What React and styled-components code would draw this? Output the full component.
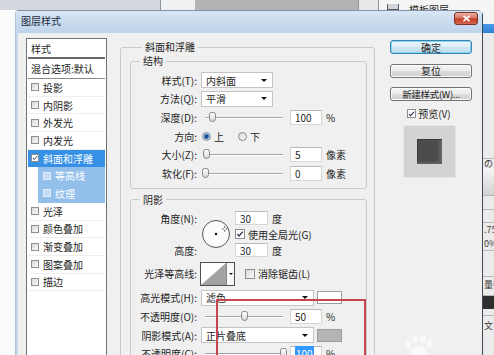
import React from 'react';
import styled, { createGlobalStyle } from 'styled-components';

const GlobalStyle = createGlobalStyle`
  html, body { margin: 0; padding: 0; }
  body {
    font-family: "Noto Sans CJK SC", "Noto Sans", sans-serif;
    font-size: 10px;
    color: #1e1e1e;
  }
`;

const Page = styled.div`
  position: relative;
  width: 494px;
  height: 355px;
  overflow: hidden;
  display: flex;
  flex-direction: column;
  background: #fafafa;
`;

/* ---------- background application around the dialog ---------- */

const TopStrip = styled.div`
  height: 10px;
  flex-shrink: 0;
  display: flex;
  overflow: hidden;
`;

const Seg = styled.div`
  width: ${p => p.$w}px;
  flex-shrink: 0;
  background: ${p => p.$bg};
  border-right: ${p => (p.$line ? '1px solid #8f969d' : 'none')};
  box-sizing: border-box;
  display: flex;
  align-items: flex-end;
  gap: 10px;
  padding-left: 8px;
  overflow: hidden;
`;

const StripText = styled.span`
  font-size: 10px;
  line-height: 10px;
  margin-bottom: -5px;
  color: #2b2b2b;
  white-space: nowrap;
`;

const StripIcon = styled.span`
  width: 10px;
  height: 5px;
  border: 1px solid #5a5a5a;
  border-top: none;
  background: #cfd5db;
`;

const Main = styled.div`
  flex: 1;
  min-height: 0;
  display: flex;
`;

const Gutter = styled.div`
  width: 15px;
  flex-shrink: 0;
  background: #fbfbfb;
`;

const SideApp = styled.div`
  width: 11px;
  flex-shrink: 0;
  display: flex;
  flex-direction: column;
  background: #ebebeb;
  overflow: hidden;
`;

const SidePiece = styled.div`
  height: ${p => p.$h}px;
  flex-shrink: 0;
  background: ${p => p.$bg || 'transparent'};
  border-bottom: ${p => (p.$line ? '1px solid #b9b9b9' : 'none')};
  box-sizing: border-box;
  font-size: 9px;
  line-height: ${p => p.$h}px;
  color: #3a3a3a;
  white-space: nowrap;
  padding-left: 1px;
`;

/* ---------- dialog frame ---------- */

const Dialog = styled.div`
  width: 468px;
  flex-shrink: 0;
  box-sizing: border-box;
  display: flex;
  flex-direction: column;
  background: #c4d6ea;
  border: 1px solid #7f91a5;
  border-left-color: #b3c3d4;
  border-right-color: #3d4b5b;
  border-bottom: none;
  border-radius: 4px 5px 0 0;
`;

const TitleBar = styled.div`
  height: 22px;
  flex-shrink: 0;
  display: flex;
  align-items: flex-start;
  justify-content: space-between;
  padding: 4px 4px 0 5px;
  box-sizing: border-box;
  background: linear-gradient(#d9e6f4, #c6d9ee 60%, #bfd3ea);
`;

const Title = styled.span`
  font-size: 10px;
  line-height: 12px;
  color: #1b2a3a;
`;

const CloseButton = styled.div`
  width: 24px;
  height: 13px;
  margin-top: -3px;
  box-sizing: border-box;
  border: 1px solid #7a3126;
  border-radius: 3px;
  background: linear-gradient(#eab3a6, #d9735f 45%, #c43b22 55%, #d3694f);
  display: flex;
  align-items: center;
  justify-content: center;
`;

const Body = styled.div`
  flex: 1;
  min-height: 0;
  margin-left: 2px;
  background: #f0f0f0;
  display: flex;
  align-items: flex-start;
  padding: 5px 0 0 8px;
`;

/* ---------- styles list ---------- */

const List = styled.div`
  width: 81px;
  flex-shrink: 0;
  align-self: stretch;
  box-sizing: border-box;
  border: 1px solid #6f7378;
  border-bottom: none;
  background: #fff;
  padding: 0 1px;
`;

const ListHead = styled.div`
  height: 20px;
  box-sizing: border-box;
  border-bottom: 2px solid #686868;
  display: flex;
  align-items: center;
  padding-left: 3px;
`;

const BlendRow = styled.div`
  height: 20px;
  box-sizing: border-box;
  border-bottom: 1px solid #8c8c8c;
  display: flex;
  align-items: center;
  padding-left: 3px;
  white-space: nowrap;
`;

const Item = styled.div`
  height: 17.7px;
  box-sizing: border-box;
  display: flex;
  align-items: center;
  gap: 4px;
  padding-left: ${p => (p.$sub ? 5 : 3)}px;
  margin-left: ${p => (p.$sub ? 10 : 0)}px;
  background: ${p => (p.$sel ? '#3690e6' : p.$sub ? '#93bfeb' : 'transparent')};
  color: ${p => (p.$sel || p.$sub ? '#fff' : '#1e1e1e')};
  border-bottom: 1px solid ${p => (p.$sel || p.$sub ? 'transparent' : '#eeeeee')};
  white-space: nowrap;
`;

const Box = styled.span`
  width: ${p => p.$s || 8}px;
  height: ${p => p.$s || 8}px;
  flex-shrink: 0;
  box-sizing: border-box;
  border: 1px solid ${p => (p.$pale ? '#e4eefa' : '#8e8e8e')};
  background: ${p =>
    p.$pale ? '#c3dbf4' : p.$on ? '#fdfdfd' : 'linear-gradient(135deg, #d8d8d8, #fafafa)'};
  display: inline-flex;
  align-items: center;
  justify-content: center;
  margin-left: ${p => p.$ml || 0}px;
`;

/* ---------- middle settings ---------- */

const Middle = styled.div`
  width: 255px;
  flex-shrink: 0;
  margin: 3px 0 0 13px;
`;

const Group = styled.fieldset`
  margin: ${p => p.$m || '0'};
  padding: ${p => p.$pad || '0'};
  border: 1px solid #cacaca;
  border-radius: 3px;
  min-width: 0;
`;

const Legend = styled.legend`
  font-size: 10px;
  line-height: 12px;
  padding: 0 3px;
  margin-left: ${p => p.$ml}px;
`;

const Row = styled.div`
  display: flex;
  align-items: center;
  height: ${p => p.$h || 18.6}px;
`;

const Label = styled.span`
  width: 70px;
  flex-shrink: 0;
  box-sizing: border-box;
  padding-right: 4px;
  text-align: right;
  white-space: nowrap;
`;

const Select = styled.div`
  width: ${p => p.$w}px;
  height: 16px;
  flex-shrink: 0;
  box-sizing: border-box;
  border: 1px solid #c4c4c4;
  background: #fff;
  display: flex;
  align-items: center;
  justify-content: space-between;
  padding: 0 5px 0 4px;
`;

const Arrow = styled.span`
  width: 0;
  height: 0;
  border-left: 3px solid transparent;
  border-right: 3px solid transparent;
  border-top: 3px solid #111;
`;

const Slider = styled.div`
  width: 89px;
  height: 12px;
  flex-shrink: 0;
  box-sizing: border-box;
  padding: 0 7px 0 4px;
  display: flex;
  align-items: center;
`;

const Track = styled.div`
  position: relative;
  flex: 1;
  height: 1px;
  background: #a6a6a6;
  box-shadow: 0 1px 0 #ffffff;
`;

const Thumb = styled.span`
  position: absolute;
  top: -5px;
  left: ${p => p.$at * 78 - 3.5}px;
  width: 7px;
  height: 10px;
  box-sizing: border-box;
  border: 1px solid #858585;
  border-radius: 3px 3px 4px 4px;
  background: linear-gradient(#fefefe, #d9d9d9);
`;

const NumBox = styled.div`
  width: ${p => p.$w || 32}px;
  height: ${p => p.$h || 15}px;
  flex-shrink: 0;
  box-sizing: border-box;
  border: 1px solid #d6d6d6;
  border-top-color: #b9b9b9;
  background: #fff;
  padding-left: 4px;
  display: flex;
  align-items: center;
`;

const Picked = styled.span`
  background: #3399ff;
  color: #fff;
  padding: 0 1px;
`;

const Unit = styled.span`
  margin-left: 4px;
  white-space: nowrap;
`;

const Radio = styled.span`
  width: 9px;
  height: 9px;
  flex-shrink: 0;
  box-sizing: border-box;
  border-radius: 50%;
  border: 1px solid #8a8a8a;
  background: ${p =>
    p.$on
      ? 'radial-gradient(circle, #1d4f8f 0 1.6px, #5e9ad6 2.4px, #dbe8f5 3.4px)'
      : 'linear-gradient(135deg, #d6d6d6, #fbfbfb)'};
  margin-left: ${p => p.$ml || 0}px;
`;

const RadioText = styled.span`
  margin-left: 3px;
`;

const AngleBlock = styled.div`
  display: grid;
  grid-template-columns: 70px 34px auto;
  grid-template-rows: 17px 15px 17px;
  align-items: center;
`;

const Dial = styled.div`
  grid-column: 2;
  grid-row: 1 / 4;
  width: 30px;
  height: 30px;
`;

const Cell = styled.div`
  grid-column: ${p => p.$col};
  grid-row: ${p => p.$row};
  display: flex;
  align-items: center;
`;

const CheckText = styled.span`
  margin-left: 3px;
  white-space: nowrap;
`;

const Contour = styled.div`
  width: 35px;
  height: 24px;
  margin-left: -1px;
  flex-shrink: 0;
  box-sizing: border-box;
  border: 1px solid #4f4f4f;
  background: #fff;
  display: flex;
`;

const ContourDrop = styled.div`
  flex: 1;
  border-left: 1px solid #8a8a8a;
  background: #f7f7f7;
  display: flex;
  align-items: center;
  justify-content: center;
`;

const SmallArrow = styled.span`
  width: 0;
  height: 0;
  border-left: 2px solid transparent;
  border-right: 2px solid transparent;
  border-top: 2px solid #111;
`;

const Swatch = styled.div`
  width: 25px;
  height: 13px;
  margin-left: 3px;
  flex-shrink: 0;
  box-sizing: border-box;
  border: 1px solid #9c9c9c;
  background: ${p => p.$color};
`;

/* ---------- right buttons ---------- */

const Side = styled.div`
  width: 82px;
  flex-shrink: 0;
  margin: 2px 0 0 15px;
  display: flex;
  flex-direction: column;
  gap: 9.5px;
`;

const Button = styled.div`
  height: 14px;
  box-sizing: border-box;
  border: 1px solid ${p => (p.$primary ? '#3b82b0' : '#737373')};
  border-radius: 3px;
  background: ${p =>
    p.$primary
      ? 'linear-gradient(#eef6fb, #dcedf7 50%, #cde4f2 51%, #c3ddee)'
      : 'linear-gradient(#f6f6f6, #ebebeb 48%, #dddddd 52%, #cfcfcf)'};
  box-shadow: ${p => (p.$primary ? 'inset 0 0 0 1px #7fd6f2' : 'inset 0 0 0 1px #fbfbfb')};
  display: flex;
  align-items: center;
  justify-content: center;
  white-space: nowrap;
  font-size: ${p => (p.$tight ? 9.5 : 10)}px;
  letter-spacing: ${p => (p.$tight ? '-0.3px' : '0')};
`;

const PreviewCheck = styled.div`
  height: 12px;
  margin-top: -3px;
  display: flex;
  align-items: center;
  justify-content: center;
  gap: 2px;
  padding-right: 4px;
`;

const PreviewBox = styled.div`
  width: 53px;
  height: 53px;
  margin: -4px 0 0 13px;
  box-sizing: border-box;
  border: 1px solid #e6e6e6;
  background: #d3d3d3;
  display: flex;
  align-items: center;
  justify-content: center;
`;

const PreviewSquare = styled.div`
  width: 25px;
  height: 25px;
  background: linear-gradient(90deg, #4a4a4a 0%, #4d4d4d 80%, #6a6a6a 100%);
  box-shadow: inset 0 -2px 0 #5e5e5e, inset 1px 1px 0 #3a3a3a;
`;

/* ---------- overlays ---------- */

const Annotation = styled.div`
  position: absolute;
  left: 216px;
  top: 299px;
  width: 150px;
  height: 80px;
  box-sizing: border-box;
  border: 2px solid #c9454e;
  pointer-events: none;
`;

const Watermark = styled.svg`
  position: absolute;
  left: 398px;
  top: 334px;
  opacity: 0.6;
  pointer-events: none;
`;

const Tick = ({ color = '#24324a' }) => (
  <svg width="8" height="8" viewBox="0 0 8 8">
    <path d="M1.3 4.1 L3.1 6 L6.8 1.6" stroke={color} strokeWidth="1.3" fill="none" />
  </svg>
);

const effects = [
  { name: '投影' },
  { name: '内阴影' },
  { name: '外发光' },
  { name: '内发光' },
  { name: '斜面和浮雕', sel: true },
  { name: '等高线', sub: true },
  { name: '纹理', sub: true },
  { name: '光泽' },
  { name: '颜色叠加' },
  { name: '渐变叠加' },
  { name: '图案叠加' },
  { name: '描边' },
];

const SliderRow = ({ label, at, value, unit, picked }) => (
  <Row>
    <Label>{label}</Label>
    <Slider>
      <Track>
        <Thumb $at={at} />
      </Track>
    </Slider>
    <NumBox>{picked ? <Picked>{value}</Picked> : value}</NumBox>
    <Unit>{unit}</Unit>
  </Row>
);

export default function App() {
  return (
    <>
      <GlobalStyle />
      <Page>
        <TopStrip>
          <Seg $w={161} $bg="#d2d8de" $line />
          <Seg $w={34} $bg="#eff1f3" />
          <Seg $w={164} $bg="#b3b3b3" $line />
          <Seg $w={20} $bg="#e9e9e9" $line />
          <Seg $w={115} $bg="#f5f5f5">
            <StripIcon />
            <StripText>模板图层</StripText>
          </Seg>
        </TopStrip>

        <Main>
          <Gutter />
          <Dialog>
            <TitleBar>
              <Title>图层样式</Title>
              <CloseButton>
                <svg width="9" height="7" viewBox="0 0 9 7">
                  <path d="M1.5 0.8 L7.5 6.2 M7.5 0.8 L1.5 6.2" stroke="#fff" strokeWidth="1.8" />
                </svg>
              </CloseButton>
            </TitleBar>

            <Body>
              <List>
                <ListHead>样式</ListHead>
                <BlendRow>混合选项:默认</BlendRow>
                {effects.map(e => (
                  <Item key={e.name} $sel={e.sel} $sub={e.sub}>
                    <Box $pale={e.sub} $on={e.sel}>
                      {e.sel && <Tick />}
                    </Box>
                    {e.name}
                  </Item>
                ))}
              </List>

              <Middle>
                <Group $pad="0 7px 0 9px">
                  <Legend $ml={12}>斜面和浮雕</Legend>

                  <Group $m="2px 0 0 0" $pad="4px 0 5px 0">
                    <Legend $ml={9}>结构</Legend>
                    <Row>
                      <Label>样式(T):</Label>
                      <Select $w={72}>
                        内斜面
                        <Arrow />
                      </Select>
                    </Row>
                    <Row>
                      <Label>方法(Q):</Label>
                      <Select $w={72}>
                        平滑
                        <Arrow />
                      </Select>
                    </Row>
                    <SliderRow label="深度(D):" at={0.1} value="100" unit="%" />
                    <Row>
                      <Label>方向:</Label>
                      <Radio $on $ml={1} />
                      <RadioText>上</RadioText>
                      <Radio $ml={14} />
                      <RadioText>下</RadioText>
                    </Row>
                    <SliderRow label="大小(Z):" at={0.02} value="5" unit="像素" />
                    <SliderRow label="软化(F):" at={0} value="0" unit="像素" />
                  </Group>

                  <Group $m="5px 0 0 0" $pad="4px 0 0 0">
                    <Legend $ml={9}>阴影</Legend>
                    <AngleBlock>
                      <Cell $col={1} $row={1}>
                        <Label>角度(N):</Label>
                      </Cell>
                      <Dial>
                        <svg width="30" height="30" viewBox="0 0 30 30">
                          <circle cx="15" cy="15" r="13.5" fill="#fbfbfb" stroke="#555" strokeWidth="1" />
                          <circle cx="15" cy="15" r="1.2" fill="#111" />
                          <path
                            d="M23.7 7.2 V8.8 M23.7 10.9 V12.5 M21 9.9 H22.6 M24.8 9.9 H26.4"
                            stroke="#333"
                            strokeWidth="0.9"
                          />
                        </svg>
                      </Dial>
                      <Cell $col={3} $row={1}>
                        <NumBox $w={33} $h={14}>30</NumBox>
                        <Unit>度</Unit>
                      </Cell>
                      <Cell $col={3} $row={2}>
                        <Box $s={10} $on>
                          <Tick />
                        </Box>
                        <CheckText>使用全局光(G)</CheckText>
                      </Cell>
                      <Cell $col={1} $row={3}>
                        <Label>高度:</Label>
                      </Cell>
                      <Cell $col={3} $row={3}>
                        <NumBox $w={33} $h={14}>30</NumBox>
                        <Unit>度</Unit>
                      </Cell>
                    </AngleBlock>

                    <Row $h={30}>
                      <Label>光泽等高线:</Label>
                      <Contour>
                        <svg width="25" height="22" viewBox="0 0 25 22">
                          <polygon points="0,22 25,0 25,22" fill="#a2a2a2" />
                        </svg>
                        <ContourDrop>
                          <SmallArrow />
                        </ContourDrop>
                      </Contour>
                      <Box $s={10} $ml={10} />
                      <CheckText>消除锯齿(L)</CheckText>
                    </Row>
                    <Row>
                      <Label>高光模式(H):</Label>
                      <Select $w={113}>
                        滤色
                        <Arrow />
                      </Select>
                      <Swatch $color="#ffffff" />
                    </Row>
                    <SliderRow label="不透明度(O):" at={0.5} value="50" unit="%" />
                    <Row>
                      <Label>阴影模式(A):</Label>
                      <Select $w={113}>
                        正片叠底
                        <Arrow />
                      </Select>
                      <Swatch $color="#b4b4b4" />
                    </Row>
                    <SliderRow label="不透明度(C):" at={1} value="100" unit="%" picked />
                  </Group>
                </Group>
              </Middle>

              <Side>
                <Button $primary>确定</Button>
                <Button>复位</Button>
                <Button $tight>新建样式(W)...</Button>
                <PreviewCheck>
                  <Box $s={9} $on>
                    <Tick />
                  </Box>
                  预览(V)
                </PreviewCheck>
                <PreviewBox>
                  <PreviewSquare />
                </PreviewBox>
              </Side>
            </Body>
          </Dialog>

          <SideApp>
            <SidePiece $h={14} $bg="#f4f4f4" />
            <SidePiece $h={9} $bg="linear-gradient(#4a98e6, #2f82d8)" />
            <SidePiece $h={126} $line />
            <SidePiece $h={9}>の</SidePiece>
            <SidePiece $h={28} $bg="linear-gradient(#f7f7f7, #d2d2d2)" $line />
            <SidePiece $h={14} $line />
            <SidePiece $h={13} $line />
            <SidePiece $h={14}>.75</SidePiece>
            <SidePiece $h={14} $line>0%</SidePiece>
            <SidePiece $h={26} $line />
            <SidePiece $h={16}>量行</SidePiece>
            <SidePiece $h={3} $line />
            <SidePiece $h={13} $bg="#2e2e2e" />
            <SidePiece $h={7} $line />
            <SidePiece $h={20}>文</SidePiece>
          </SideApp>
        </Main>

        <Annotation />
        <Watermark width="44" height="24" viewBox="0 0 44 24">
          <g fill="#ffffff">
            <ellipse cx="10" cy="10" rx="3" ry="4" />
            <ellipse cx="17" cy="5" rx="3" ry="4" />
            <ellipse cx="25" cy="5" rx="3" ry="4" />
            <ellipse cx="32" cy="10" rx="3" ry="4" />
            <ellipse cx="21" cy="18" rx="8" ry="6" />
          </g>
        </Watermark>
      </Page>
    </>
  );
}
